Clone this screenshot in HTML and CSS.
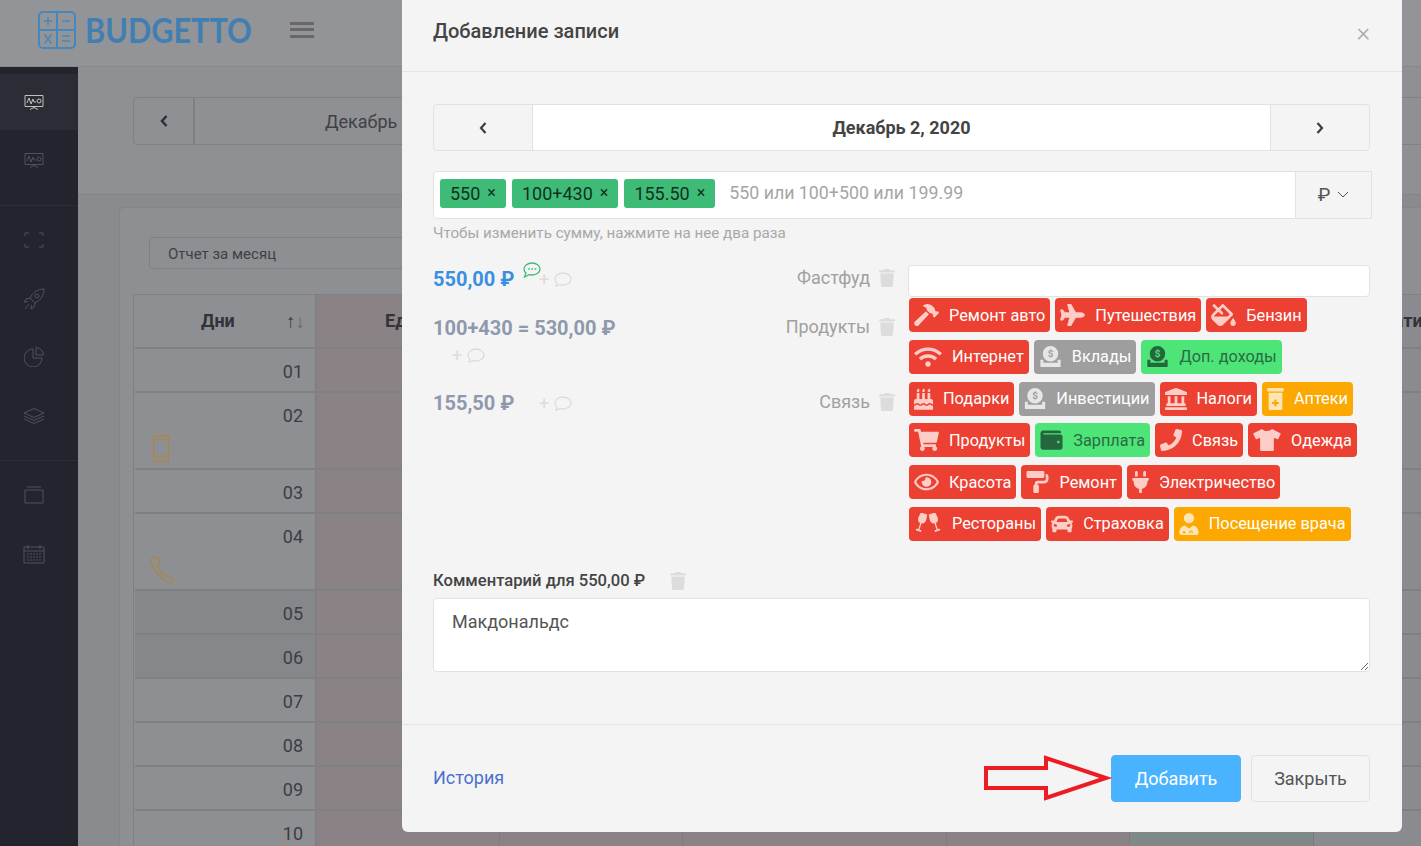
FILE: index.html
```html
<!DOCTYPE html>
<html lang="ru">
<head>
<meta charset="utf-8">
<title>Budgetto</title>
<link rel="stylesheet" href="styles.css">
</head>
<body>
<div class="page">
  <header class="topbar">
    <svg class="logo-mark" width="38" height="38" viewBox="0 0 38 38" fill="none" stroke="#4687bd" stroke-width="1.5">
      <rect x="1" y="1" width="36" height="36" rx="4" stroke-width="2"/>
      <path d="M19 1v36M1 19h36" stroke-width="2"/>
      <path d="M6 10h8M10 6v8M24 10h8M6.500 23.500l7 9M13.500 23.500l-7 9M24 25h8M24 30h8"/>
    </svg>
    <span class="brand">BUDGETTO</span>
    <span class="burger"><i></i><i></i><i></i></span>
  </header>
  <div class="shell">
    <nav class="side">
      <div class="side-item is-active"><svg width="20" height="16" viewBox="0 0 20 16" fill="none" stroke="currentColor"><path d="M1 1.500h18v11H1zM3 9l2-5 2 6 2-5 1 3h2"/><circle cx="15" cy="7" r="2"/><path d="M10 13v1M6 15.500l4-2 4 2"/></svg></div>
      <div class="side-item is-dim"><svg width="20" height="16" viewBox="0 0 20 16" fill="none" stroke="currentColor"><path d="M1 1.500h18v11H1zM3 9l2-5 2 6 2-5 1 3h2"/><circle cx="15" cy="7" r="2"/><path d="M10 13v1M6 15.500l4-2 4 2"/></svg></div>
      <div class="side-rule"></div>
      <div class="side-item"><svg width="20" height="16" viewBox="0 0 20 16" fill="none" stroke="currentColor"><path d="M1 4V1h4M15 1h4v3M1 12v3h4M15 15h4v-3"/></svg></div>
      <div class="side-item"><svg width="22" height="22" viewBox="0 0 22 22" fill="none" stroke="currentColor"><path d="M21 1c-6 0-11 3-14 9l5 5c6-3 9-8 9-14zM7 10l-4 1-2 3 4-.5M12 15l-1 4-3 2 .5-4M6 16l-4 5"/><circle cx="14" cy="8" r="2"/></svg></div>
      <div class="side-item"><svg width="20" height="20" viewBox="0 0 20 20" fill="none" stroke="currentColor"><path d="M9 2a9 9 0 1 0 9 9H9zM12 .500a8 8 0 0 1 7.500 7.500H12z"/></svg></div>
      <div class="side-item"><svg width="22" height="16" viewBox="0 0 22 16" fill="none" stroke="currentColor"><path d="M11 .500L21 5l-10 4.500L1 5zM1 8l10 4.500L21 8M1 11l10 4.500L21 11"/></svg></div>
      <div class="side-rule"></div>
      <div class="side-item"><svg width="20" height="18" viewBox="0 0 20 18" fill="none" stroke="currentColor"><path d="M1 4h18v13H1zM3 1h14"/></svg></div>
      <div class="side-item"><svg width="22" height="20" viewBox="0 0 22 20" fill="none" stroke="currentColor"><path d="M1 3h20v16H1zM1 7h20M5 1v4M17 1v4"/><path stroke-dasharray="2 1" d="M4 10h14M4 13h14M4 16h14"/></svg></div>
    </nav>
    <main class="content">
      <section class="month-panel">
        <div class="month-bar">
          <span class="month-prev"><svg width="8" height="12" viewBox="0 0 8 12" fill="none" stroke="currentColor" stroke-width="2.500"><path d="M6.500 1L2 6l4.500 5"/></svg></span>
          <span class="month-name">Декабрь 2020</span>
        </div>
      </section>
      <section class="card">
        <div class="report-select">Отчет за месяц</div>
        <div class="grid">
          <div class="row row-head"><div class="c-day"><b>Дни</b><span class="sort">↑<em>↓</em></span></div><div class="c-cat c-first"><b>Еда</b></div><div class="c-cat"></div><div class="c-cat c-wide"></div><div class="c-cat"></div><div class="c-cat c-income"></div><div class="c-rest"><b>Статистика</b></div></div>
          <div class="row"><div class="c-day"><span class="num">01</span></div><div class="c-cat"></div><div class="c-cat"></div><div class="c-cat c-wide"></div><div class="c-cat"></div><div class="c-cat c-income"></div><div class="c-rest"></div></div>
          <div class="row"><div class="c-day"><span class="num">02</span><svg class="day-icon" width="16" height="27" viewBox="0 0 16 27" fill="none" stroke="#ae8441" stroke-width="1.200"><rect x=".6" y=".6" width="14.800" height="25.800" rx="1"/><path d="M.6 4h14.800M.6 21h14.800M6 23.500h4"/></svg></div><div class="c-cat"></div><div class="c-cat"></div><div class="c-cat c-wide"></div><div class="c-cat"></div><div class="c-cat c-income"></div><div class="c-rest"></div></div>
          <div class="row"><div class="c-day"><span class="num">03</span></div><div class="c-cat"></div><div class="c-cat"></div><div class="c-cat c-wide"></div><div class="c-cat"></div><div class="c-cat c-income"></div><div class="c-rest"></div></div>
          <div class="row"><div class="c-day"><span class="num">04</span><svg class="day-icon day-icon-call" width="24" height="27" viewBox="0 0 24 27" fill="none" stroke="#ae8441" stroke-width="1.200"><path d="M5 1C2 1 1 3 1 5c1 8 7 15 15 20 3 2 7 2 7-1 0-2-3-4-5-5-1 0-2 2-3 1-3-2-6-6-7-9 0-1 2-2 2-3C10 6 8 1 5 1z"/></svg></div><div class="c-cat"></div><div class="c-cat"></div><div class="c-cat c-wide"></div><div class="c-cat"></div><div class="c-cat c-income"></div><div class="c-rest"></div></div>
          <div class="row is-weekend"><div class="c-day"><span class="num">05</span></div><div class="c-cat"></div><div class="c-cat"></div><div class="c-cat c-wide"></div><div class="c-cat"></div><div class="c-cat c-income"></div><div class="c-rest"></div></div>
          <div class="row is-weekend"><div class="c-day"><span class="num">06</span></div><div class="c-cat"></div><div class="c-cat"></div><div class="c-cat c-wide"></div><div class="c-cat"></div><div class="c-cat c-income"></div><div class="c-rest"></div></div>
          <div class="row"><div class="c-day"><span class="num">07</span></div><div class="c-cat"></div><div class="c-cat"></div><div class="c-cat c-wide"></div><div class="c-cat"></div><div class="c-cat c-income"></div><div class="c-rest"></div></div>
          <div class="row"><div class="c-day"><span class="num">08</span></div><div class="c-cat"></div><div class="c-cat"></div><div class="c-cat c-wide"></div><div class="c-cat"></div><div class="c-cat c-income"></div><div class="c-rest"></div></div>
          <div class="row"><div class="c-day"><span class="num">09</span></div><div class="c-cat"></div><div class="c-cat"></div><div class="c-cat c-wide"></div><div class="c-cat"></div><div class="c-cat c-income"></div><div class="c-rest"></div></div>
          <div class="row"><div class="c-day"><span class="num">10</span></div><div class="c-cat"></div><div class="c-cat"></div><div class="c-cat c-wide"></div><div class="c-cat"></div><div class="c-cat c-income"></div><div class="c-rest"></div></div>
        </div>
      </section>
    </main>
  </div>
</div>

<div class="modal">
  <div class="modal-head">
    <h2>Добавление записи</h2>
    <span class="modal-x">×</span>
  </div>
  <div class="modal-body">
    <div class="date-nav">
      <span class="date-btn"><svg width="8" height="12" viewBox="0 0 8 12" fill="none" stroke="currentColor" stroke-width="2.200"><path d="M6.500 1L2 6l4.500 5"/></svg></span>
      <strong>Декабрь 2, 2020</strong>
      <span class="date-btn"><svg width="8" height="12" viewBox="0 0 8 12" fill="none" stroke="currentColor" stroke-width="2.200"><path d="M1.500 1L6 6l-4.500 5"/></svg></span>
    </div>
    <div class="sum-group">
      <div class="sum-input">
        <span class="chip">550<i>×</i></span>
        <span class="chip">100+430<i>×</i></span>
        <span class="chip">155.50<i>×</i></span>
        <input class="sum-field" type="text" placeholder="550 или 100+500 или 199.99">
      </div>
      <div class="currency">₽<svg width="12" height="7" viewBox="0 0 12 7" fill="none" stroke="currentColor"><path d="M1 1l5 5 5-5"/></svg></div>
    </div>
    <p class="hint">Чтобы изменить сумму, нажмите на нее два раза</p>

    <div class="split">
      <div class="entries">
        <div class="entry entry-a">
          <div class="entry-main">
            <span class="amount is-current">550,00 ₽</span>
            <span class="note"><i>+</i><svg width="18" height="15" viewBox="0 0 18 15" fill="none" stroke="currentColor" stroke-width="1.300"><path d="M9 1c4.500 0 8 2.500 8 6s-3.500 6-8 6c-1 0-2 0-3-.4L2 14l1-3C1.700 10 1 8.500 1 7c0-3.500 3.500-6 8-6z"/></svg></span>
            <svg class="bubble" width="18" height="16" viewBox="0 0 18 16" fill="none" stroke="#3dbb77" stroke-width="1.300"><path d="M9 1c4.500 0 8 2.500 8 6s-3.500 6-8 6c-1 0-2 0-3-.4L1.500 15l1.500-4C1.700 10 1 8.500 1 7c0-3.500 3.500-6 8-6z"/><path stroke-dasharray="1.600 1.600" stroke-width="1.600" d="M5.200 7h8"/></svg>
          </div>
          <div class="entry-cat"><span>Фастфуд</span><svg class="trash" width="16" height="18" viewBox="0 0 448 512"><path d="M432 32H312l-9.400-18.700A24 24 0 0 0 281.100 0H166.800a23.720 23.720 0 0 0-21.400 13.300L136 32H16A16 16 0 0 0 0 48v32a16 16 0 0 0 16 16h416a16 16 0 0 0 16-16V48a16 16 0 0 0-16-16zM53.200 467a48 48 0 0 0 47.900 45h245.800a48 48 0 0 0 47.900-45L416 128H32z"/></svg></div>
        </div>
        <div class="entry entry-b">
          <div class="entry-main">
            <span class="amount">100+430 = 530,00 ₽</span>
            <span class="note note-below"><i>+</i><svg width="18" height="15" viewBox="0 0 18 15" fill="none" stroke="currentColor" stroke-width="1.300"><path d="M9 1c4.500 0 8 2.500 8 6s-3.500 6-8 6c-1 0-2 0-3-.4L2 14l1-3C1.700 10 1 8.500 1 7c0-3.500 3.500-6 8-6z"/></svg></span>
          </div>
          <div class="entry-cat"><span>Продукты</span><svg class="trash" width="16" height="18" viewBox="0 0 448 512"><path d="M432 32H312l-9.400-18.700A24 24 0 0 0 281.100 0H166.800a23.720 23.720 0 0 0-21.400 13.300L136 32H16A16 16 0 0 0 0 48v32a16 16 0 0 0 16 16h416a16 16 0 0 0 16-16V48a16 16 0 0 0-16-16zM53.200 467a48 48 0 0 0 47.900 45h245.800a48 48 0 0 0 47.900-45L416 128H32z"/></svg></div>
        </div>
        <div class="entry">
          <div class="entry-main">
            <span class="amount">155,50 ₽</span>
            <span class="note"><i>+</i><svg width="18" height="15" viewBox="0 0 18 15" fill="none" stroke="currentColor" stroke-width="1.300"><path d="M9 1c4.500 0 8 2.500 8 6s-3.500 6-8 6c-1 0-2 0-3-.4L2 14l1-3C1.700 10 1 8.500 1 7c0-3.500 3.500-6 8-6z"/></svg></span>
          </div>
          <div class="entry-cat"><span>Связь</span><svg class="trash" width="16" height="18" viewBox="0 0 448 512"><path d="M432 32H312l-9.400-18.700A24 24 0 0 0 281.100 0H166.800a23.720 23.720 0 0 0-21.400 13.300L136 32H16A16 16 0 0 0 0 48v32a16 16 0 0 0 16 16h416a16 16 0 0 0 16-16V48a16 16 0 0 0-16-16zM53.200 467a48 48 0 0 0 47.900 45h245.800a48 48 0 0 0 47.900-45L416 128H32z"/></svg></div>
        </div>
      </div>

      <div class="picker">
        <input class="cat-search" type="text">
        <div class="tags">
          <span class="tag red"><svg width="25" height="22" viewBox="0 0 576 512"><path d="M571.310 193.940l-22.630-22.630c-6.250-6.250-16.380-6.250-22.630 0l-11.310 11.310-28.900-28.900c5.630-21.310.36-44.900-16.350-61.610l-45.250-45.250c-62.480-62.480-163.790-62.480-226.280 0l90.510 45.250v18.750c0 16.970 6.740 33.250 18.750 45.250l49.140 49.140c16.710 16.710 40.300 21.980 61.610 16.350l28.900 28.900-11.310 11.310c-6.250 6.250-6.250 16.380 0 22.630l22.630 22.630c6.250 6.250 16.380 6.250 22.630 0l90.510-90.510c6.230-6.240 6.230-16.370-.02-22.620zm-286.720-15.200c-3.700-3.700-6.840-7.790-9.850-11.950L19.640 404.960c-25.570 23.880-26.260 64.190-1.530 88.930s65.050 24.050 88.930-1.530l238.130-255.070c-3.960-2.910-7.900-5.870-11.440-9.410l-49.140-49.140z"/></svg>Ремонт авто</span>
          <span class="tag red"><svg width="25" height="22" viewBox="0 0 576 512"><path d="M480 192H365.710L260.610 8.060A16.014 16.014 0 0 0 246.710 0h-65.500c-10.630 0-18.300 10.170-15.380 20.390L214.860 192H112l-43.200-57.600c-3.020-4.030-7.770-6.400-12.800-6.400H16.010C5.600 128-2.040 137.780.49 147.880L32 256 .49 364.120C-2.040 374.220 5.600 384 16.010 384H56c5.040 0 9.780-2.370 12.800-6.400L112 320h102.860l-49.030 171.600c-2.920 10.220 4.750 20.400 15.380 20.400h65.500c5.740 0 11.040-3.080 13.890-8.060L365.710 320H480c35.350 0 96-28.650 96-64s-60.650-64-96-64z"/></svg>Путешествия</span>
          <span class="tag red"><svg width="25" height="22" viewBox="0 0 576 512"><path d="M512 320s-64 92.650-64 128c0 35.350 28.660 64 64 64s64-28.650 64-64-64-128-64-128zm-9.370-102.940L294.940 9.370C288.690 3.120 280.500 0 272.310 0s-16.380 3.120-22.620 9.370l-81.580 81.580L81.930 4.760c-6.250-6.250-16.380-6.250-22.620 0L36.690 27.380c-6.240 6.250-6.240 16.380 0 22.620l86.190 86.180-94.760 94.760c-37.490 37.480-37.490 98.260 0 135.750l117.190 117.190c18.740 18.740 43.310 28.120 67.870 28.120 24.570 0 49.130-9.370 67.870-28.120l221.570-221.570c12.500-12.500 12.500-32.750.01-45.250zm-116.220 70.970H65.930c1.360-3.840 3.570-7.980 7.430-11.830l13.150-13.150 81.610-81.610 58.600 58.600c12.490 12.490 32.750 12.490 45.240 0s12.490-32.750 0-45.240l-58.600-58.600 58.950-58.950 162.440 162.440-48.340 48.340z"/></svg>Бензин</span>
          <span class="tag red"><svg width="28" height="22" viewBox="0 0 640 512"><path d="M634.910 154.880C457.740-8.990 182.190-8.930 5.090 154.880c-6.660 6.160-6.790 16.590-.35 22.980l34.240 33.970c6.140 6.100 16.020 6.230 22.400.38 145.920-133.680 371.300-133.710 517.250 0 6.380 5.850 16.260 5.710 22.400-.38l34.240-33.970c6.430-6.390 6.300-16.820-.36-22.980zM320 352c-35.350 0-64 28.650-64 64s28.650 64 64 64 64-28.650 64-64-28.650-64-64-64zm202.670-83.590c-115.260-101.930-290.210-101.820-405.340 0-6.900 6.100-7.120 16.690-.57 23.150l34.440 33.990c6 5.920 15.660 6.320 22.050.8 83.950-72.570 209.740-72.410 293.490 0 6.390 5.520 16.050 5.130 22.050-.8l34.440-33.990c6.560-6.460 6.330-17.060-.56-23.150z"/></svg>Интернет</span>
          <span class="tag grey"><svg width="23" height="22" viewBox="0 0 512 512"><path fill-rule="evenodd" d="M256 0a180 180 0 1 1 0 360 180 180 0 1 1 0-360zM20 320h70v70h332v-70h70v150a20 20 0 0 1-20 20H40a20 20 0 0 1-20-20z"/><text x="256" y="265" text-anchor="middle" class="coin-sign">$</text></svg>Вклады</span>
          <span class="tag green"><svg width="23" height="22" viewBox="0 0 512 512"><path fill-rule="evenodd" d="M256 0a180 180 0 1 1 0 360 180 180 0 1 1 0-360zM20 320h70v70h332v-70h70v150a20 20 0 0 1-20 20H40a20 20 0 0 1-20-20z"/><text x="256" y="265" text-anchor="middle" class="coin-sign">$</text></svg>Доп. доходы</span>
          <span class="tag red"><svg width="19" height="22" viewBox="0 0 448 512"><path d="M448 384c-28.020 0-31.260-32-74.500-32-43.430 0-46.825 32-74.750 32-27.695 0-31.454-32-74.750-32-42.842 0-47.218 32-74.500 32-28.148 0-31.202-32-74.750-32-43.547 0-46.653 32-74.750 32v-80c0-26.500 21.500-48 48-48h16V112h64v144h64V112h64v144h64V112h64v144h16c26.500 0 48 21.500 48 48v80zm0 128H0v-96c43.356 0 46.767-32 74.750-32 27.951 0 31.253 32 74.750 32 42.843 0 47.217-32 74.500-32 28.148 0 31.201 32 74.750 32 43.357 0 46.767-32 74.750-32 27.488 0 31.252 32 74.500 32v96zM96 96c-17.750 0-32-14.250-32-32 0-31 32-23 32-64 12 0 32 29.500 32 56s-14.250 40-32 40zm128 0c-17.750 0-32-14.250-32-32 0-31 32-23 32-64 12 0 32 29.500 32 56s-14.250 40-32 40zm128 0c-17.750 0-32-14.250-32-32 0-31 32-23 32-64 12 0 32 29.500 32 56s-14.250 40-32 40z"/></svg>Подарки</span>
          <span class="tag grey"><svg width="22" height="22" viewBox="0 0 512 512"><path fill-rule="evenodd" d="M256 0a180 180 0 1 1 0 360 180 180 0 1 1 0-360zM20 320h70v70h332v-70h70v150a20 20 0 0 1-20 20H40a20 20 0 0 1-20-20z"/><text x="256" y="265" text-anchor="middle" class="coin-sign">$</text></svg>Инвестиции</span>
          <span class="tag red"><svg width="22" height="22" viewBox="0 0 512 512"><path d="M501.620 92.110L267.240 2.040a31.958 31.958 0 0 0-22.470 0L10.380 92.110A16.001 16.001 0 0 0 0 107.090V144c0 8.840 7.160 16 16 16h480c8.840 0 16-7.160 16-16v-36.910c0-6.670-4.140-12.640-10.380-14.980zM64 192v160H48c-8.840 0-16 7.160-16 16v48h448v-48c0-8.840-7.160-16-16-16h-16V192h-64v160h-96V192h-64v160h-96V192H64zm432 256H16c-8.840 0-16 7.160-16 16v32c0 8.840 7.160 16 16 16h480c8.840 0 16-7.160 16-16v-32c0-8.840-7.160-16-16-16z"/></svg>Налоги</span>
          <span class="tag orange"><svg width="17" height="22" viewBox="0 0 384 512"><path fill-rule="evenodd" d="M16 0h352a16 16 0 0 1 16 16v48a16 16 0 0 1-16 16H16A16 16 0 0 1 0 64V16A16 16 0 0 1 16 0zM32 112h320v368a32 32 0 0 1-32 32H64a32 32 0 0 1-32-32zM165 270v55h-55v45h55v55h50v-55h55v-45h-55v-55z"/></svg>Аптеки</span>
          <span class="tag red"><svg width="25" height="22" viewBox="0 0 576 512"><path d="M528.120 301.319l47.273-208C578.806 78.301 567.391 64 551.990 64H159.208l-9.166-44.810C147.758 8.021 137.930 0 126.529 0H24C10.745 0 0 10.745 0 24v16c0 13.255 10.745 24 24 24h69.883l70.248 343.435C147.325 417.100 136 435.222 136 456c0 30.928 25.072 56 56 56s56-25.072 56-56c0-15.674-6.447-29.835-16.824-40h209.647C430.447 426.165 424 440.326 424 456c0 30.928 25.072 56 56 56s56-25.072 56-56c0-22.172-12.888-41.332-31.579-50.405l5.517-24.276c3.413-15.018-8.002-29.319-23.403-29.319H218.117l-6.545-32h293.145c11.206 0 20.920-7.754 23.403-18.681z"/></svg>Продукты</span>
          <span class="tag green"><svg width="23" height="22" viewBox="0 0 512 512"><path d="M461.200 128H80c-8.840 0-16-7.160-16-16s7.160-16 16-16h384c8.840 0 16-7.160 16-16 0-26.510-21.490-48-48-48H64C28.650 32 0 60.650 0 96v320c0 35.350 28.650 64 64 64h397.200c28.020 0 50.800-21.530 50.800-48V176c0-26.470-22.780-48-50.800-48zM416 336c-17.670 0-32-14.330-32-32s14.330-32 32-32 32 14.330 32 32-14.330 32-32 32z"/></svg>Зарплата</span>
          <span class="tag red"><svg width="22" height="22" viewBox="0 0 512 512"><path d="M493.400 24.600l-104-24c-11.300-2.600-22.900 3.300-27.500 13.900l-48 112c-4.200 9.800-1.400 21.300 6.900 28l60.600 49.600c-36 76.700-98.900 140.500-177.200 177.200l-49.600-60.600c-6.800-8.300-18.200-11.100-28-6.900l-112 48C3.900 366.500-2 378.100.6 389.400l24 104C27.100 504.200 36.700 512 48 512c256.100 0 464-207.500 464-464 0-11.200-7.700-20.900-18.600-23.400z"/></svg>Связь</span>
          <span class="tag red"><svg width="28" height="22" viewBox="0 0 640 512"><path d="M631.200 96.500L436.500 0C416.400 27.800 371.900 47.200 320 47.200S223.600 27.800 203.500 0L8.800 96.500c-7.900 4-11.100 13.600-7.200 21.500l57.200 114.500c4 7.900 13.600 11.100 21.500 7.200l56.600-27.700c10.600-5.200 23 2.500 23 14.400V480c0 17.700 14.300 32 32 32h256c17.700 0 32-14.300 32-32V226.300c0-11.800 12.400-19.600 23-14.400l56.600 27.700c7.900 4 17.500.8 21.500-7.200L638.300 118c4-7.900.8-17.600-7.100-21.500z"/></svg>Одежда</span>
          <span class="tag red"><svg width="25" height="22" viewBox="0 0 576 512"><path d="M288 144a110.940 110.940 0 0 0-31.240 5 55.400 55.400 0 0 1 7.240 27 56 56 0 0 1-56 56 55.400 55.400 0 0 1-27-7.240A111.710 111.710 0 1 0 288 144zm284.520 97.400C518.290 135.590 410.930 64 288 64S57.680 135.640 3.480 241.410a32.350 32.350 0 0 0 0 29.190C57.710 376.410 165.070 448 288 448s230.320-71.640 284.520-177.410a32.350 32.350 0 0 0 0-29.190zM288 400c-98.650 0-189.090-55-237.930-144C98.910 167 189.340 112 288 112s189.090 55 237.930 144C477.100 345 386.660 400 288 400z"/></svg>Красота</span>
          <span class="tag red"><svg width="23" height="22" viewBox="0 0 512 512"><path d="M416 128V32c0-17.670-14.330-32-32-32H32C14.330 0 0 14.330 0 32v96c0 17.670 14.330 32 32 32h352c17.670 0 32-14.330 32-32zm32-64v128c0 17.670-14.330 32-32 32H256c-35.350 0-64 28.650-64 64v32c-17.670 0-32 14.330-32 32v128c0 17.670 14.330 32 32 32h64c17.670 0 32-14.330 32-32V352c0-17.670-14.330-32-32-32v-32h160c53.020 0 96-42.980 96-96v-64c0-35.350-28.650-64-64-64z"/></svg>Ремонт</span>
          <span class="tag red"><svg width="17" height="22" viewBox="0 0 384 512"><path d="M320 32c0-17.670-14.330-32-32-32s-32 14.330-32 32v96h64V32zm48 128H16c-8.840 0-16 7.160-16 16v32c0 8.840 7.160 16 16 16h16v32c0 77.400 54.970 141.970 128 156.790V512h64v-99.210c73.030-14.820 128-79.390 128-156.790v-32h16c8.840 0 16-7.160 16-16v-32c0-8.840-7.160-16-16-16zM128 32c0-17.670-14.330-32-32-32S64 14.330 64 32v96h64V32z"/></svg>Электричество</span>
          <span class="tag red"><svg width="28" height="22" viewBox="0 0 640 512"><g transform="rotate(18 150 250)"><path d="M70 0h160l15 130c5 60-35 105-80 110v150h50v40H85v-40h50V240c-45-5-85-50-80-110z"/></g><g transform="translate(640) scale(-1 1) rotate(18 150 250)"><path d="M70 0h160l15 130c5 60-35 105-80 110v150h50v40H85v-40h50V240c-45-5-85-50-80-110z"/></g></svg>Рестораны</span>
          <span class="tag red"><svg width="22" height="22" viewBox="0 0 512 512"><path d="M499.990 176h-59.870l-16.640-41.600C406.380 91.630 365.570 64 319.500 64h-127c-46.060 0-86.880 27.630-103.990 70.400L71.870 176H12.010C4.200 176-1.530 183.340.37 190.910l6 24C7.700 220.250 12.500 224 18.010 224h20.070C24.650 235.730 16 252.780 16 272v48c0 16.120 6.160 30.670 16 41.930V416c0 17.670 14.330 32 32 32h32c17.670 0 32-14.330 32-32v-32h256v32c0 17.670 14.330 32 32 32h32c17.670 0 32-14.330 32-32v-54.070c9.840-11.250 16-25.800 16-41.930v-48c0-19.220-8.650-36.270-22.070-48H494c5.510 0 10.310-3.750 11.640-9.090l6-24c1.890-7.570-3.840-14.910-11.650-14.910zm-352.060-17.830c7.290-18.220 24.940-30.170 44.570-30.170h127c19.630 0 37.280 11.950 44.570 30.170L384 208H128l19.930-49.830zM96 319.800c-19.200 0-32-12.760-32-31.900S76.800 256 96 256s48 28.710 48 47.850-28.800 15.950-48 15.950zm320 0c-19.200 0-48 3.190-48-15.950S396.800 256 416 256s32 12.760 32 31.900-12.800 31.900-32 31.900z"/></svg>Страховка</span>
          <span class="tag orange"><svg width="20" height="22" viewBox="0 0 448 512"><circle cx="224" cy="120" r="120"/><path fill-rule="evenodd" d="M0 464c0-100 60-170 130-176l94 70 94-70c70 6 130 76 130 176a48 48 0 0 1-48 48H48a48 48 0 0 1-48-48zM110 420a30 30 0 1 0 .1 0zM310 440a40 40 0 0 0-80 0v30h25v-30a15 15 0 0 1 30 0v30h25z"/></svg>Посещение врача</span>
        </div>
      </div>
    </div>

    <div class="comment-label"><span>Комментарий для 550,00 ₽</span><svg class="trash" width="16" height="18" viewBox="0 0 448 512"><path d="M432 32H312l-9.400-18.700A24 24 0 0 0 281.100 0H166.800a23.720 23.720 0 0 0-21.400 13.300L136 32H16A16 16 0 0 0 0 48v32a16 16 0 0 0 16 16h416a16 16 0 0 0 16-16V48a16 16 0 0 0-16-16zM53.200 467a48 48 0 0 0 47.900 45h245.800a48 48 0 0 0 47.900-45L416 128H32z"/></svg></div>
    <textarea class="comment">Макдональдс</textarea>
  </div>
  <div class="modal-foot">
    <a class="history" href="#">История</a>
    <div class="foot-actions">
      <svg class="callout" width="132" height="48" viewBox="0 0 132 48" fill="none" stroke="#ed1c24" stroke-width="4" stroke-linejoin="miter"><path d="M5 13h60V3l60 20-60 20V33H5z"/></svg>
      <button class="btn btn-primary" type="button">Добавить</button>
      <button class="btn" type="button">Закрыть</button>
    </div>
  </div>
</div>
</body>
</html>
```

FILE: styles.css
```css
* { box-sizing: border-box; }
html, body { margin: 0; height: 846px; overflow: hidden; }
body { font-family: Roboto, "Noto Sans", sans-serif; color: #444; background: #8a8b8e; }

.page { width: 1421px; height: 846px; overflow: hidden; }

.topbar { height: 67px; background: #939497; border-bottom: 1px solid #87888b; display: flex; align-items: center; padding-left: 38px; }
.logo-mark { flex: none; margin-top: -6px; }
.brand { font-family: Lato, sans-serif; font-weight: 700; font-size: 35px; color: #417fb3; margin: -8px 0 0 9px; line-height: 38px; transform: scaleX(.875); transform-origin: left center; }
.burger { display: flex; flex-direction: column; gap: 3.500px; margin: -7px 0 0 14px; }
.burger i { display: block; width: 24px; height: 3px; background: #68686a; }

.shell { display: flex; height: 779px; }
.side { width: 78px; flex: none; background: #22252d; padding-top: 7px; color: #4f525a; }
.side-item { height: 58.500px; display: flex; align-items: center; justify-content: center; padding-right: 10px; }
.side-item.is-active { height: 56px; background: #2a2d35; color: #c5c0ba; }
.side-item.is-dim { height: 60px; }
.side-rule { height: 1px; background: #2c2f37; margin: 15px 0 5px; }

.content { flex: 1; min-width: 0; overflow: hidden; background: #8a8b8e; }
.month-panel { height: 128px; padding: 30px 0 0 55px; background: #8f9093; border-bottom: 1px solid #838487; }
.month-bar { height: 48px; width: 1300px; border: 1px solid #7f8083; border-radius: 4px; display: flex; align-items: center; font-size: 18px; color: #3f4046; }
.month-prev { width: 61px; height: 100%; display: flex; align-items: center; justify-content: center; border-right: 2px solid #7f8083; color: #2e2f35; }
.month-name { margin-left: 130px; white-space: nowrap; }

.card { margin: 12px 0 0 41px; padding: 29px 0 0 13px; background: #8e8f92; border: 1px solid #85868a; border-radius: 4px 0 0 0; height: 700px; width: 1400px; }
.report-select { width: 400px; height: 32px; margin-left: 16px; padding-left: 18px; border: 1px solid #7f8083; border-radius: 4px; font-size: 15px; line-height: 33px; color: #3f4046; }
.grid { margin-top: 25px; border: 1px solid #7f8083; border-right: 0; padding: 0 0 0 1px; }
.row { display: flex; border-bottom: 2px solid #7f8083; }
.row-head { height: 54px; font-size: 18px; }
.row-head b { font-weight: 700; color: #32333a; }
.row:not(.row-head) { font-size: 18px; color: #3c3d44; }
.c-day { width: 182px; min-height: 42px; padding: 12px 12px 6px 18px; border-right: 2px solid #7f8083; display: flex; flex-direction: column; flex: none; }
.num { display: block; line-height: 22px; text-align: right; }
.day-icon { margin-top: 8px; display: block; }
.day-icon-call { margin-left: -3px; }
.c-cat { width: 183px; background: #8b8285; flex: none; border-right: 1px solid #82797c; }
.c-first { padding: 15px 0 0 68px; }
.c-wide { width: 264px; }
.c-income { width: 184px; background: #7f8988; }
.c-rest { flex: 1; background: #8a8b8e; padding: 15px 0 0 59px; white-space: nowrap; }
.row.is-weekend .c-day { background: #86878a; }
.row-head .c-day { flex-direction: row; justify-content: space-between; padding: 15px 10px 0 66px; }
.sort { color: #3c3d44; font-size: 19px; }
.sort em { font-style: normal; color: #67686c; }

.modal { position: absolute; left: 402px; top: 0; width: 1000px; height: 832px; background: #f4f4f4; border-radius: 0 0 6px 6px; display: flex; flex-direction: column; }
.modal-head { height: 72px; flex: none; border-bottom: 1px solid #e4e4e4; padding: 20px 32px 0 31px; display: flex; justify-content: space-between; align-items: flex-start; }
.modal-head h2 { margin: 0; font-size: 20px; font-weight: 500; line-height: 22px; color: #444; }
.modal-x { font-size: 26px; font-weight: 300; line-height: 28px; color: #a9a9a9; margin-top: -2px; }

.modal-body { height: 653px; flex: none; padding: 32px 32px 0 31px; border-bottom: 1px solid #e4e4e4; }
.date-nav { display: grid; grid-template-columns: 98px 1fr 99px; height: 47px; border: 1px solid #e2e2e2; border-radius: 4px; align-items: stretch; }
.date-btn { display: flex; align-items: center; justify-content: center; color: #3d3d3d; }
.date-btn:last-child { border-left: 1px solid #e2e2e2; }
.date-nav strong { background: #fff; display: flex; align-items: center; justify-content: center; font-size: 18px; font-weight: 700; color: #444; border-left: 1px solid #e2e2e2; }

.sum-group { display: flex; height: 48px; margin: 20px -2px 0 0; }
.sum-input { flex: 1; display: flex; align-items: center; gap: 6px; padding: 0 6px 4px; background: #fff; border: 1px solid #e2e2e2; border-radius: 4px 0 0 4px; }
.chip { height: 29px; padding: 0 10px; background: #3dbb77; border-radius: 3px; color: #14301f; font-size: 18px; line-height: 29px; display: flex; }
.chip i { font-style: normal; font-size: 16px; margin-left: 7px; line-height: 27px; }
.sum-field { flex: 1; min-width: 0; border: 0; outline: 0; margin: 0 0 2px 6px; background: transparent; font: 17.800px Roboto, sans-serif; color: #444; }
.sum-field::placeholder { color: #a5a5a5; opacity: 1; }
.currency { width: 76px; padding-bottom: 2px; border: 1px solid #e2e2e2; border-left: 0; display: flex; align-items: center; justify-content: center; gap: 7px; font-size: 19px; color: #555; }
.hint { margin: 4px 0 0; font-size: 15.200px; line-height: 20px; color: #a8a8a8; }

.split { display: flex; gap: 13px; margin-top: 22px; }
.entries { width: 462px; flex: none; }
.entry { display: flex; justify-content: space-between; align-items: flex-start; }
.entry-a { height: 49px; }
.entry-b { height: 75px; }
.entry-main { position: relative; width: 150px; display: flex; flex-wrap: wrap; align-items: center; }
.amount { font-size: 20px; font-weight: 700; line-height: 28px; color: #8f99ad; white-space: nowrap; min-width: 106px; }
.amount.is-current { color: #3b8fe0; }
.note { display: inline-flex; align-items: center; gap: 5px; color: #dcdcdc; height: 28px; }
.note i { font-style: normal; font-size: 18px; }
.note-below { margin-left: 19px; height: 26px; }
.bubble { position: absolute; left: 90px; top: -3px; }
.entry-cat { display: flex; align-items: center; gap: 9px; height: 25px; font-size: 18px; color: #a0a0a0; white-space: nowrap; }
.trash { fill: #dcdcdc; flex: none; }

.picker { width: 462px; flex: none; }
.cat-search { display: block; width: 100%; height: 32px; background: #fff; border: 1px solid #e2e2e2; border-radius: 4px; outline: 0; }
.tags { display: flex; flex-wrap: wrap; gap: 7.800px 5px; padding: 1px 0 0 1px; }
.tag { display: inline-flex; align-items: center; height: 34px; padding: 0 5px; border-radius: 4px; color: #fff; font-size: 16.300px; white-space: nowrap; }
.tag svg { flex: none; fill: currentColor; margin-right: 10px; }
.tag.red { background: #ec4032; }
.tag.red svg { color: #ffcdc8; }
.tag.grey { background: #9e9e9e; }
.tag.grey svg { color: #e6e6e6; }
.tag.green { background: #4de577; color: #2d6a45; }
.tag.green svg { color: #25663f; }
.tag.orange { background: #fca800; }
.tag.orange svg { color: #ffe5b3; }
.coin-sign { font-family: Roboto, sans-serif; font-size: 230px; font-weight: 700; }
.grey .coin-sign { fill: #9e9e9e; }
.green .coin-sign { fill: #4de577; }

.comment-label { display: flex; align-items: center; gap: 25px; margin-top: 29px; height: 20px; padding-top: 2px; font-size: 16.600px; font-weight: 500; color: #444; }
.comment { display: block; width: 100%; height: 74px; margin-top: 8px; padding: 12px 18px; background: #fff; border: 1px solid #e2e2e2; border-radius: 4px; font: 18px/22px Roboto, sans-serif; color: #555; outline: 0; }

.modal-foot { flex: 1; display: flex; justify-content: space-between; align-items: center; padding: 0 32px 0 31px; }
.history { font-size: 18px; color: #4a6fd0; text-decoration: none; margin-top: -2px; }
.foot-actions { position: relative; display: flex; gap: 10px; }
.callout { position: absolute; left: -130px; top: 0; }
.btn { height: 47px; width: 119px; border: 1px solid #e2e2e2; border-radius: 4px; background: transparent; font: 18px Roboto, sans-serif; color: #555; padding: 0; }
.btn-primary { width: 130px; background: #4ab3ff; border-color: #4ab3ff; color: #fff; }
```
